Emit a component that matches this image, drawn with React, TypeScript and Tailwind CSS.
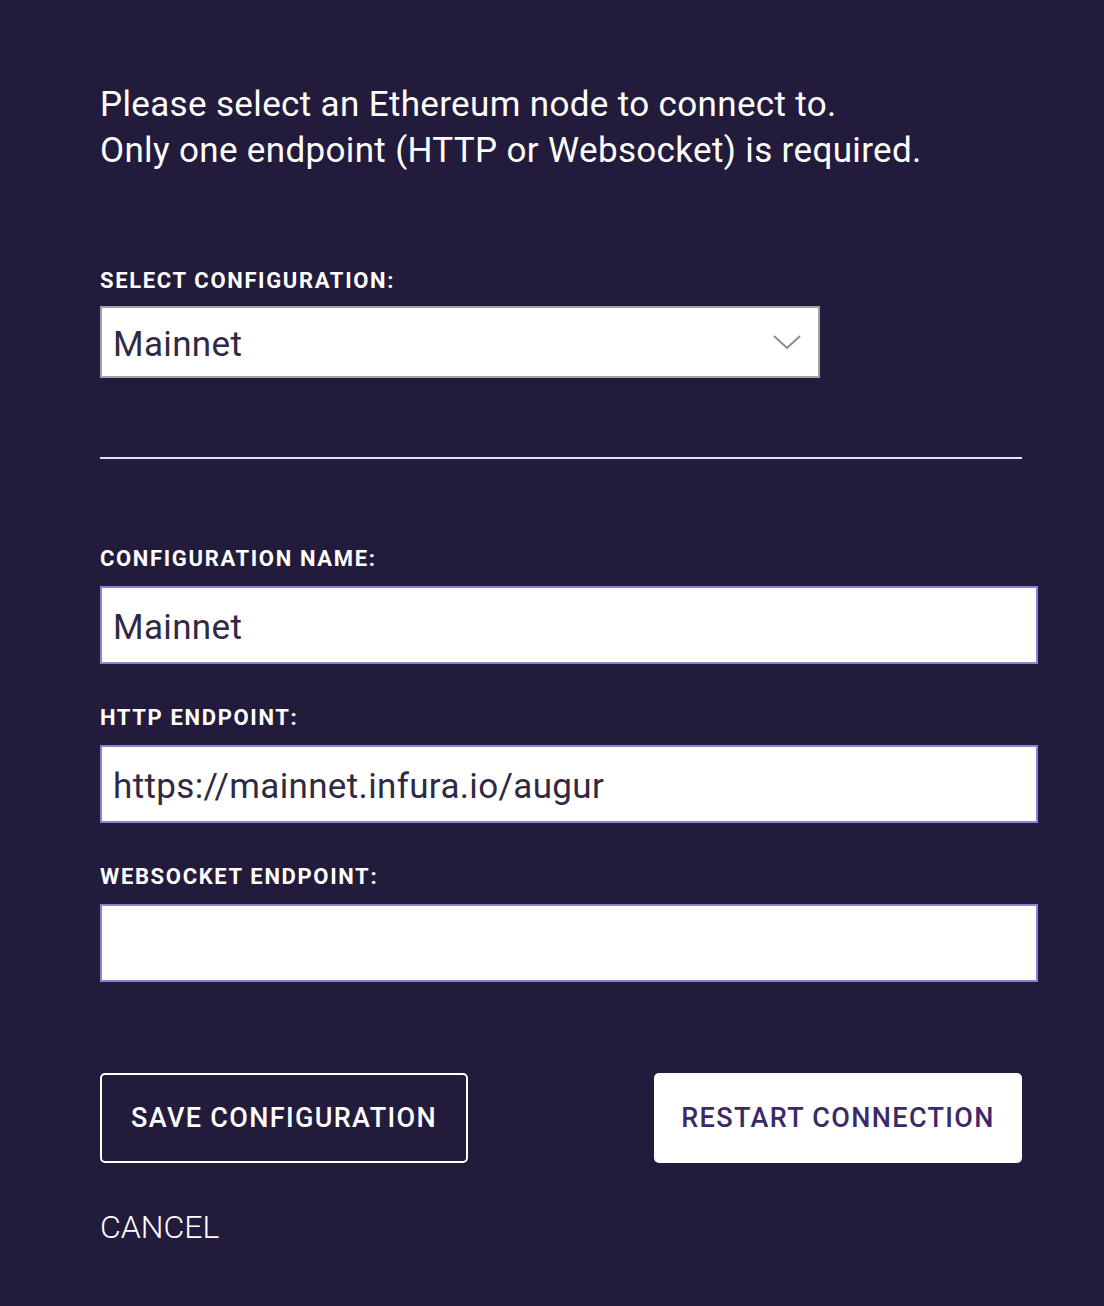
import React from 'react';

const Label: React.FC<{ children: React.ReactNode }> = ({ children }) => (
  <div className="text-[22px] leading-[26px] font-bold tracking-[0.075em] text-white">{children}</div>
);

const Field: React.FC<{ value?: string }> = ({ value }) => (
  <div className="mt-[14px] h-[78px] w-[938px] border-2 border-[#8e80d4] bg-white flex items-center px-[11px] pt-[6px]">
    <span className="text-[35px] tracking-[0.01em] text-[#2f2944]">{value}</span>
  </div>
);

export default function App() {
  return (
    <div
      className="min-h-screen bg-[#231b3b] pl-[100px] pt-[82px] pb-[60px] text-white"
      style={{ fontFamily: 'Roboto, "Liberation Sans", sans-serif' }}
    >
      <p className="text-[35px] leading-[46px] font-normal tracking-[0.01em]">
        Please select an Ethereum node to connect to.
        <br />
        Only one endpoint (HTTP or Websocket) is required.
      </p>

      <div className="mt-[94px]">
        <Label>SELECT CONFIGURATION:</Label>
        <div className="mt-[12px] h-[72px] w-[720px] border-2 border-[#a19fa8] bg-white flex items-center justify-between pl-[11px] pr-[16px]">
          <span className="pt-[6px] text-[35px] tracking-[0.01em] text-[#2f2944]">Mainnet</span>
          <svg width="30" height="18" viewBox="0 0 30 18" fill="none" stroke="#8a8893" strokeWidth="2">
            <path d="M2 3 L15 15 L28 3" />
          </svg>
        </div>
      </div>

      <div className="mt-[79px] h-[2px] w-[922px] bg-[#e4e2ec]" />

      <div className="mt-[87px]">
        <Label>CONFIGURATION NAME:</Label>
        <Field value="Mainnet" />
      </div>

      <div className="mt-[41px]">
        <Label>HTTP ENDPOINT:</Label>
        <Field value="https://mainnet.infura.io/augur" />
      </div>

      <div className="mt-[41px]">
        <Label>WEBSOCKET ENDPOINT:</Label>
        <Field />
      </div>

      <div className="mt-[91px] flex w-[922px] justify-between">
        <button className="h-[90px] w-[368px] rounded-[5px] border-2 border-white text-[27px] font-medium tracking-[0.05em] text-white">
          SAVE CONFIGURATION
        </button>
        <button className="h-[90px] w-[368px] rounded-[5px] bg-white text-[27px] font-medium tracking-[0.05em] text-[#3c2a68]">
          RESTART CONNECTION
        </button>
      </div>

      <div className="mt-[44px] text-[32px] leading-[40px] font-light text-white">CANCEL</div>
    </div>
  );
}
